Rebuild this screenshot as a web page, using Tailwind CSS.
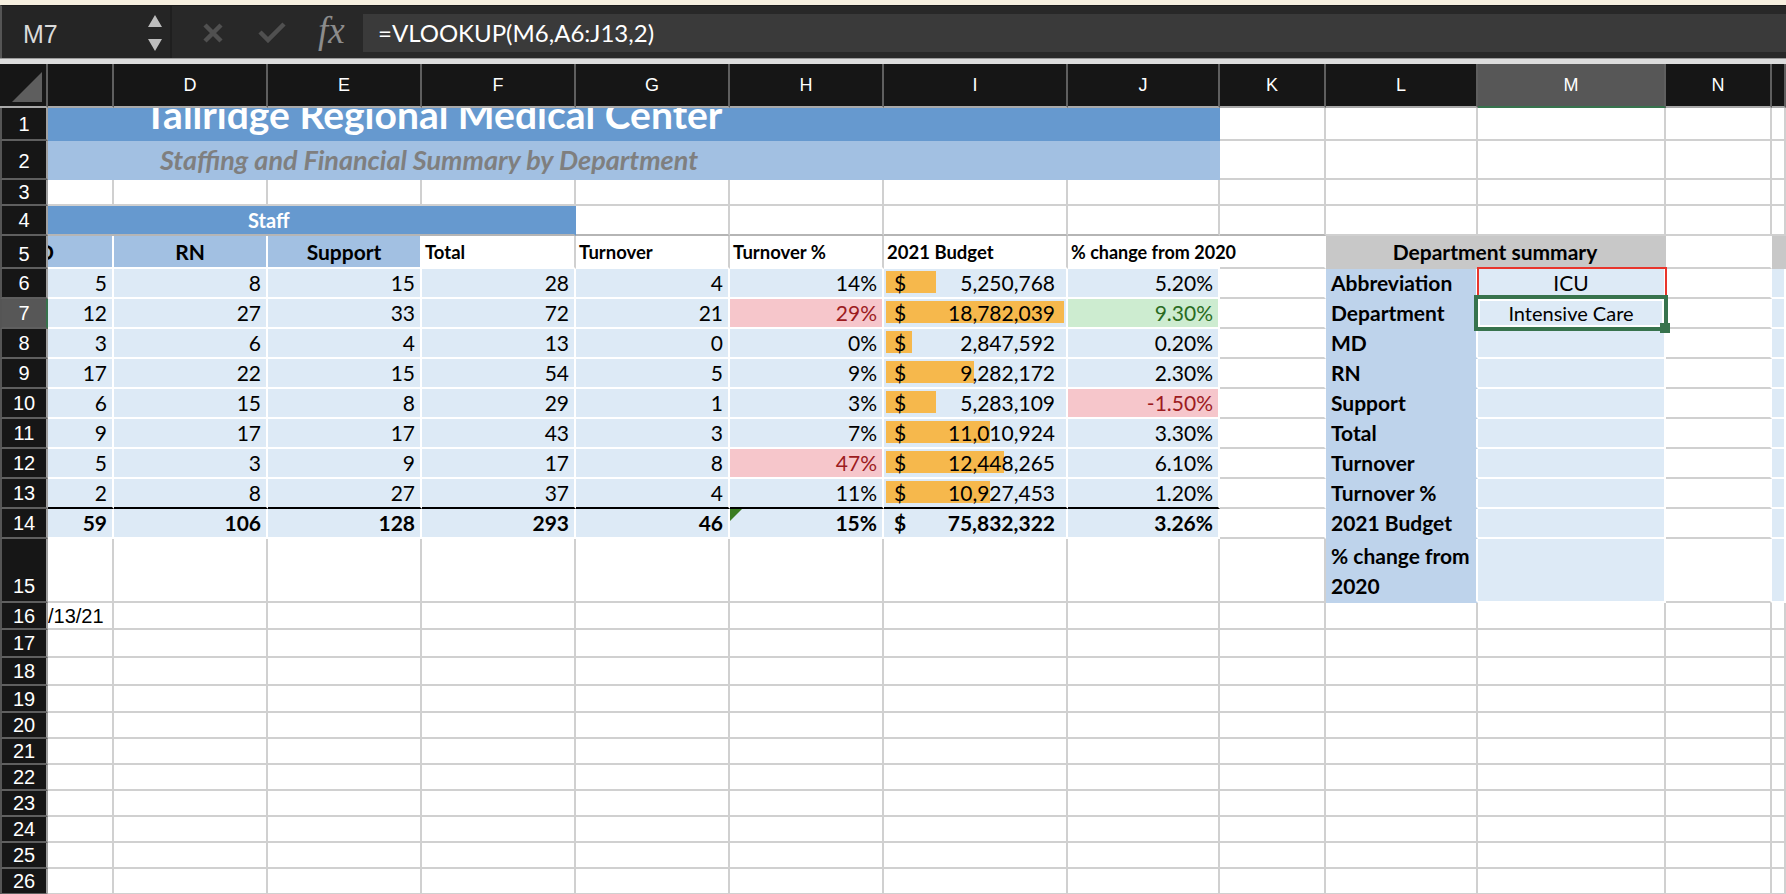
<!DOCTYPE html>
<html>
<head>
<meta charset="utf-8">
<title>Staffing summary</title>
<script src="https://cdn.jsdelivr.net/npm/@tailwindcss/browser@4"></script>
</head>
<body class="bg-white overflow-hidden">
<div class="w-[1786px] h-[894px] overflow-hidden">

  <!-- title bar strip + formula bar -->
  <div class="h-[5px] bg-[#f6efdf]"></div>
  <div class="h-[53px] bg-[#282828] border-l-2 border-[#555] border-t border-t-[#1c1c1c] flex items-stretch">
    <div class="w-[170px] bg-[#252525] border-r-2 border-[#1f1f1f] relative flex items-center pl-[21px] pt-[5px] font-['Liberation_Sans',sans-serif] text-[25px] text-[#dadada]">
      M7
      <svg class="absolute left-[146px] top-[9px]" width="14" height="36" viewBox="0 0 14 36"><path d="M7 0L14 12H0Z M0 24H14L7 36Z" fill="#bdbdbd"/></svg>
    </div>
    <div class="w-[191px] relative">
      <svg class="absolute left-[31px] top-[17px]" width="20" height="20" viewBox="0 0 20 20"><path d="M2 2L18 18M18 2L2 18" stroke="#505050" stroke-width="4.5" fill="none"/></svg>
      <svg class="absolute left-[86px] top-[16px]" width="28" height="21" viewBox="0 0 28 21"><path d="M2 10L10 18L26 2" stroke="#505050" stroke-width="4.5" fill="none"/></svg>
      <span class="absolute left-[146px] top-[6px] font-['Liberation_Serif',serif] italic text-[37px] leading-[38px] text-[#8c8c8c]">fx</span>
    </div>
    <div class="flex-1 bg-[#3a3a3a] mt-[8px] mb-[6px] flex items-center pl-[15px] font-['Lato',sans-serif] text-[24px] text-white">=VLOOKUP(M6,A6:J13,2)</div>
  </div>
  <div class="h-[6px] bg-[#dcdcdc] border-t border-[#9a9a9a]"></div>

  <!-- sheet -->
  <table class="table-fixed w-[1786px] border-separate border-spacing-0 font-['Lato',sans-serif] text-[21px] leading-[24px] text-black
    [&_td]:p-0 [&_td]:border-r-2 [&_td]:border-b-2 [&_td]:border-[#d0d0d0]
    [&_thead_th]:bg-[#161616] [&_thead_th]:border-r-2 [&_thead_th]:border-[#5f5f5f] [&_thead_th]:border-b-2 [&_thead_th]:border-b-[#a9a9a9] [&_thead_th]:font-normal [&_thead_th]:text-white [&_thead_th]:text-[18px] [&_thead_th]:font-['Liberation_Sans',sans-serif]
    [&_tbody_th]:bg-[#161616] [&_tbody_th]:border-l-2 [&_tbody_th]:border-l-[#555] [&_tbody_th]:border-b-2 [&_tbody_th]:border-b-[#5f5f5f] [&_tbody_th]:border-r-2 [&_tbody_th]:border-r-[#a0a0a0] [&_tbody_th]:font-normal [&_tbody_th]:text-white [&_tbody_th]:text-[20px] [&_tbody_th]:font-['Liberation_Sans',sans-serif]
    [&_.d]:bg-[#ddeaf6] [&_.d]:border-white [&_.d]:text-right [&_.d]:pr-[5px]
    [&_.h]:font-bold [&_.h]:text-[18.5px] [&_.h]:pl-[3px] [&_.h]:border-b-white [&_.h]:whitespace-nowrap
    [&_.l]:bg-[#bed3eb] [&_.l]:border-b-[#bed3eb] [&_.l]:border-r-white [&_.l]:font-bold [&_.l]:pl-[5px]
    [&_.n]:border-r-white">
    <colgroup>
      <col class="w-[48px]"><col class="w-[66px]"><col class="w-[154px]"><col class="w-[154px]"><col class="w-[154px]"><col class="w-[154px]"><col class="w-[154px]"><col class="w-[184px]"><col class="w-[152px]"><col class="w-[106px]"><col class="w-[152px]"><col class="w-[188px]"><col class="w-[106px]"><col class="w-[14px]">
    </colgroup>
    <thead>
      <tr class="h-[44px]">
        <th class="relative"><svg class="absolute left-[12px] top-[8px]" width="30" height="30" viewBox="0 0 30 30"><path d="M30 0V30H0Z" fill="#5e5e5e"/></svg></th>
        <th></th><th>D</th><th>E</th><th>F</th><th>G</th><th>H</th><th>I</th><th>J</th><th>K</th><th>L</th>
        <th class="bg-[#575757]! border-b-[#37734d]!">M</th><th>N</th><th></th>
      </tr>
    </thead>
    <tbody>
      <tr class="h-[33px]">
        <th>1</th>
        <td colspan="8" class="bg-[#6699cf] border-[#6699cf]!"><div class="h-[31px] overflow-hidden pl-[96px] font-bold text-[39px] leading-[12px] text-white whitespace-nowrap">Tallridge Regional Medical Center</div></td>
        <td></td><td></td><td></td><td></td><td></td>
      </tr>
      <tr class="h-[39px]">
        <th class="pt-[2px]">2</th>
        <td colspan="8" class="bg-[#a2c0e2] border-[#a2c0e2]! pl-[112px]! font-bold italic text-[27px] text-[#7f7f7f] whitespace-nowrap">Staffing and Financial Summary by Department</td>
        <td></td><td></td><td></td><td></td><td></td>
      </tr>
      <tr class="h-[25px]">
        <th>3</th><td></td><td></td><td></td><td></td><td></td><td></td><td></td><td></td><td></td><td></td><td></td><td></td><td></td>
      </tr>
      <tr class="h-[30px]">
        <th>4</th>
        <td colspan="4" class="bg-[#6699cf] border-r-[#6699cf]! border-b-[#b5b5b5]! pl-[200px]! font-bold text-[20px] text-white">Staff</td>
        <td class="border-b-[#b5b5b5]!"></td><td class="border-b-[#b5b5b5]!"></td><td class="border-b-[#b5b5b5]!"></td><td class="border-b-[#b5b5b5]!"></td><td class="border-b-[#b5b5b5]!"></td><td></td><td></td><td></td><td></td>
      </tr>
      <tr class="h-[33px]">
        <th class="pt-[5px]">5</th>
        <td class="bg-[#a2c0e2] border-white! font-bold overflow-hidden"><div class="-ml-[10px]">D</div></td>
        <td class="bg-[#a2c0e2] border-white! font-bold text-center">RN</td>
        <td class="bg-[#a2c0e2] border-white! font-bold text-center">Support</td>
        <td class="h">Total</td>
        <td class="h">Turnover</td>
        <td class="h">Turnover %</td>
        <td class="h">2021 Budget</td>
        <td class="h text-[18px]! border-r-white!">% change from 2020</td>
        <td class="n"></td>
        <td colspan="2" class="bg-[#c8c8c8] border-[#c8c8c8]! font-bold text-center">Department summary</td>
        <td class="n"></td>
        <td class="bg-[#c8c8c8] border-[#c8c8c8]!"></td>
      </tr>
      <tr class="h-[30px]">
        <th>6</th>
        <td class="d">5</td><td class="d">8</td><td class="d">15</td><td class="d">28</td><td class="d">4</td><td class="d">14%</td>
        <td class="d relative"><div class="absolute left-[2px] top-[2px] h-[22px] w-[50px] bg-[#f6b84c]"></div><div class="relative flex justify-between pl-[10px] pr-[6px]"><span>$</span><span>5,250,768</span></div></td>
        <td class="d">5.20%</td>
        <td class="n"></td><td class="l">Abbreviation</td>
        <td class="d text-center! pr-0! relative">ICU<div class="absolute -top-[2px] -left-[1px] w-[190px] h-[32px] border-2 border-[#e8352c]"></div></td>
        <td class="n"></td><td class="d"></td>
      </tr>
      <tr class="h-[30px]">
        <th class="bg-[#575757]! border-r-[#37734d]!">7</th>
        <td class="d">12</td><td class="d">27</td><td class="d">33</td><td class="d">72</td><td class="d">21</td><td class="d bg-[#f6c6cb]! text-[#9c1c1f]">29%</td>
        <td class="d relative"><div class="absolute left-[2px] top-[2px] h-[22px] w-[178px] bg-[#f6b84c]"></div><div class="relative flex justify-between pl-[10px] pr-[6px]"><span>$</span><span>18,782,039</span></div></td>
        <td class="d bg-[#cdecd0]! text-[#2a6b22]">9.30%</td>
        <td class="n"></td><td class="l">Department</td>
        <td class="d text-center! pr-0! relative text-[20px]">Intensive Care
          <div class="absolute -top-[4px] -left-[4px] w-[194px] h-[36px] border-4 border-[#37734d] ring-2 ring-inset ring-white"></div>
          <div class="absolute top-[24px] left-[182px] w-[10px] h-[10px] bg-[#37734d]"></div>
        </td>
        <td class="n"></td><td class="d"></td>
      </tr>
      <tr class="h-[30px]">
        <th>8</th>
        <td class="d">3</td><td class="d">6</td><td class="d">4</td><td class="d">13</td><td class="d">0</td><td class="d">0%</td>
        <td class="d relative"><div class="absolute left-[2px] top-[2px] h-[22px] w-[26px] bg-[#f6b84c]"></div><div class="relative flex justify-between pl-[10px] pr-[6px]"><span>$</span><span>2,847,592</span></div></td>
        <td class="d">0.20%</td>
        <td class="n"></td><td class="l">MD</td><td class="d"></td><td class="n"></td><td class="d"></td>
      </tr>
      <tr class="h-[30px]">
        <th>9</th>
        <td class="d">17</td><td class="d">22</td><td class="d">15</td><td class="d">54</td><td class="d">5</td><td class="d">9%</td>
        <td class="d relative"><div class="absolute left-[2px] top-[2px] h-[22px] w-[88px] bg-[#f6b84c]"></div><div class="relative flex justify-between pl-[10px] pr-[6px]"><span>$</span><span>9,282,172</span></div></td>
        <td class="d">2.30%</td>
        <td class="n"></td><td class="l">RN</td><td class="d"></td><td class="n"></td><td class="d"></td>
      </tr>
      <tr class="h-[30px]">
        <th>10</th>
        <td class="d">6</td><td class="d">15</td><td class="d">8</td><td class="d">29</td><td class="d">1</td><td class="d">3%</td>
        <td class="d relative"><div class="absolute left-[2px] top-[2px] h-[22px] w-[50px] bg-[#f6b84c]"></div><div class="relative flex justify-between pl-[10px] pr-[6px]"><span>$</span><span>5,283,109</span></div></td>
        <td class="d bg-[#f6c6cb]! text-[#9c1c1f]">-1.50%</td>
        <td class="n"></td><td class="l">Support</td><td class="d"></td><td class="n"></td><td class="d"></td>
      </tr>
      <tr class="h-[30px]">
        <th>11</th>
        <td class="d">9</td><td class="d">17</td><td class="d">17</td><td class="d">43</td><td class="d">3</td><td class="d">7%</td>
        <td class="d relative"><div class="absolute left-[2px] top-[2px] h-[22px] w-[104px] bg-[#f6b84c]"></div><div class="relative flex justify-between pl-[10px] pr-[6px]"><span>$</span><span>11,010,924</span></div></td>
        <td class="d">3.30%</td>
        <td class="n"></td><td class="l">Total</td><td class="d"></td><td class="n"></td><td class="d"></td>
      </tr>
      <tr class="h-[30px]">
        <th>12</th>
        <td class="d">5</td><td class="d">3</td><td class="d">9</td><td class="d">17</td><td class="d">8</td><td class="d bg-[#f6c6cb]! text-[#9c1c1f]">47%</td>
        <td class="d relative"><div class="absolute left-[2px] top-[2px] h-[22px] w-[118px] bg-[#f6b84c]"></div><div class="relative flex justify-between pl-[10px] pr-[6px]"><span>$</span><span>12,448,265</span></div></td>
        <td class="d">6.10%</td>
        <td class="n"></td><td class="l">Turnover</td><td class="d"></td><td class="n"></td><td class="d"></td>
      </tr>
      <tr class="h-[30px]">
        <th>13</th>
        <td class="d border-b-black!">2</td><td class="d border-b-black!">8</td><td class="d border-b-black!">27</td><td class="d border-b-black!">37</td><td class="d border-b-black!">4</td><td class="d border-b-black!">11%</td>
        <td class="d border-b-black! relative"><div class="absolute left-[2px] top-[2px] h-[22px] w-[104px] bg-[#f6b84c]"></div><div class="relative flex justify-between pl-[10px] pr-[6px]"><span>$</span><span>10,927,453</span></div></td>
        <td class="d border-b-black!">1.20%</td>
        <td class="n"></td><td class="l">Turnover %</td><td class="d"></td><td class="n"></td><td class="d"></td>
      </tr>
      <tr class="h-[30px] font-bold">
        <th>14</th>
        <td class="d">59</td><td class="d">106</td><td class="d">128</td><td class="d">293</td><td class="d">46</td>
        <td class="d relative">15%<svg class="absolute left-0 top-0" width="12" height="12" viewBox="0 0 12 12"><path d="M0 0H12L0 12Z" fill="#3b7d23"/></svg></td>
        <td class="d"><div class="flex justify-between pl-[10px] pr-[6px]"><span>$</span><span>75,832,322</span></div></td>
        <td class="d">3.26%</td>
        <td class="n"></td><td class="l">2021 Budget</td><td class="d"></td><td class="n"></td><td class="d"></td>
      </tr>
      <tr class="h-[64px]">
        <th class="align-bottom pb-[3px]">15</th>
        <td></td><td></td><td></td><td></td><td></td><td></td><td></td><td></td><td></td>
        <td class="l leading-[30px] align-bottom">% change from 2020</td>
        <td class="d"></td><td class="n"></td><td class="d"></td>
      </tr>
      <tr class="h-[27px]">
        <th>16</th>
        <td class="overflow-hidden font-['Liberation_Sans',sans-serif] text-[20px] whitespace-nowrap">/13/21</td>
        <td></td><td></td><td></td><td></td><td></td><td></td><td></td><td></td><td></td><td></td><td></td><td></td>
      </tr>
      <tr class="h-[28px]"><th>17</th><td></td><td></td><td></td><td></td><td></td><td></td><td></td><td></td><td></td><td></td><td></td><td></td><td></td></tr>
      <tr class="h-[28px]"><th>18</th><td></td><td></td><td></td><td></td><td></td><td></td><td></td><td></td><td></td><td></td><td></td><td></td><td></td></tr>
      <tr class="h-[27px]"><th>19</th><td></td><td></td><td></td><td></td><td></td><td></td><td></td><td></td><td></td><td></td><td></td><td></td><td></td></tr>
      <tr class="h-[26px]"><th>20</th><td></td><td></td><td></td><td></td><td></td><td></td><td></td><td></td><td></td><td></td><td></td><td></td><td></td></tr>
      <tr class="h-[26px]"><th>21</th><td></td><td></td><td></td><td></td><td></td><td></td><td></td><td></td><td></td><td></td><td></td><td></td><td></td></tr>
      <tr class="h-[26px]"><th>22</th><td></td><td></td><td></td><td></td><td></td><td></td><td></td><td></td><td></td><td></td><td></td><td></td><td></td></tr>
      <tr class="h-[26px]"><th>23</th><td></td><td></td><td></td><td></td><td></td><td></td><td></td><td></td><td></td><td></td><td></td><td></td><td></td></tr>
      <tr class="h-[26px]"><th>24</th><td></td><td></td><td></td><td></td><td></td><td></td><td></td><td></td><td></td><td></td><td></td><td></td><td></td></tr>
      <tr class="h-[26px]"><th>25</th><td></td><td></td><td></td><td></td><td></td><td></td><td></td><td></td><td></td><td></td><td></td><td></td><td></td></tr>
      <tr class="h-[26px]"><th>26</th><td></td><td></td><td></td><td></td><td></td><td></td><td></td><td></td><td></td><td></td><td></td><td></td><td></td></tr>
    </tbody>
  </table>
</div>
</body>
</html>
